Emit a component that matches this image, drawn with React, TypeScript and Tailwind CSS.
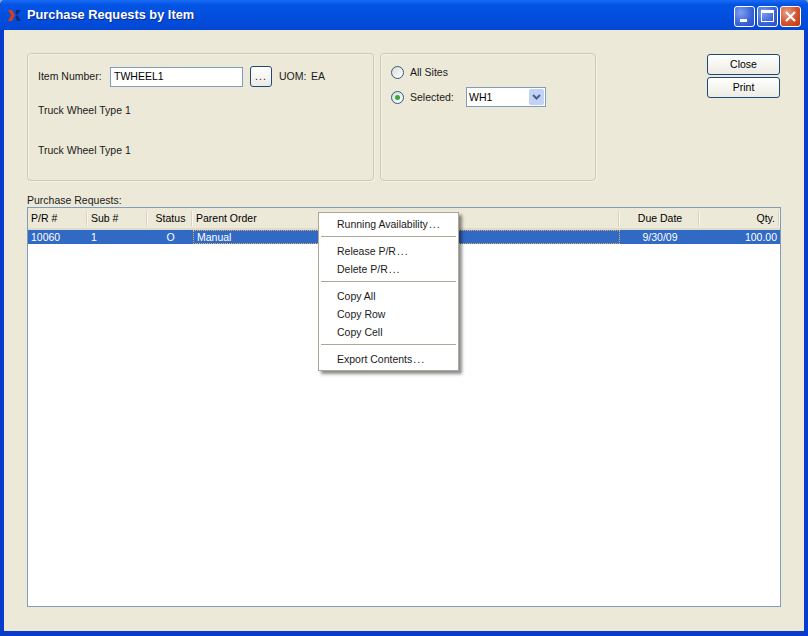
import React from "react";

const font = "font-['Liberation_Sans',sans-serif]";

function WinButton({ kind }: { kind: "min" | "max" | "close" }) {
  const bg =
    kind === "close"
      ? "bg-[radial-gradient(circle_at_30%_30%,#e8a088,#d6512c_55%,#b93a12)]"
      : "bg-[radial-gradient(circle_at_30%_30%,#7d9ff0,#3a62d8_60%,#2a4cc4)]";
  return (
    <div className={`w-[21px] h-[21px] rounded-[3px] border border-white flex items-center justify-center ${bg}`}>
      {kind === "min" && <div className="w-[7px] h-[3px] bg-white mt-[9px] mr-[3px]" />}
      {kind === "max" && <div className="w-[13px] h-[12px] border border-white border-t-[3px]" />}
      {kind === "close" && (
        <svg width="13" height="13" viewBox="0 0 13 13">
          <path d="M2 2l9 9M11 2l-9 9" stroke="#fff" strokeWidth="2.2" />
        </svg>
      )}
    </div>
  );
}

function PushButton({ label }: { label: string }) {
  return (
    <div className="w-[73px] h-[21px] rounded-[3px] border border-[#1f4a78] bg-gradient-to-b from-white to-[#ecebe4] flex items-center justify-center text-black">
      {label}
    </div>
  );
}

function Radio({ checked }: { checked?: boolean }) {
  return (
    <div className="w-[13px] h-[13px] rounded-full border border-[#2f5a86] bg-gradient-to-br from-[#dcdcd4] to-white flex items-center justify-center">
      {checked && <div className="w-[5px] h-[5px] rounded-full bg-[#3aa63e]" />}
    </div>
  );
}

function HeaderCell({ label, width, right, center }: { label: string; width: string; right?: boolean; center?: boolean }) {
  return (
    <div className={`${width} h-[21px] flex items-center pl-[3px] relative ${right ? "justify-end pr-[5px]" : "pr-[3px]"} ${center ? "justify-center" : ""}`}>
      {label}
      <div className="absolute right-0 top-[3px] h-[15px] w-[2px] bg-[#f8f7f0] border-l border-[#d6d3c2]" />
    </div>
  );
}

function MenuItem({ label, dots }: { label: string; dots?: boolean }) {
  return (
    <div className="h-[18px] pl-[18px] flex items-center text-[#1a1a1a]">
      {label}
      {dots && <span className="tracking-[1px] ml-[1px]">...</span>}
    </div>
  );
}

function MenuSep() {
  return <div className="h-px bg-[#aca899] mx-[2px] mt-[3px] mb-[5px]" />;
}

export default function App() {
  return (
    <div className="w-[808px] h-[636px] bg-[#8fa5c8]">
      <div className={`w-[808px] h-[636px] rounded-t-[5px] bg-[#0a3ccc] flex flex-col overflow-hidden text-[10.5px] leading-none text-[#1a1a1a] ${font}`}>
        {/* Title bar */}
        <div className="h-[30px] shrink-0 bg-gradient-to-b from-[#1a6cf5] via-[#0354e4] via-15% to-[#0248d4] flex items-center pl-[8px] pr-[7px]">
          <svg width="13" height="11" viewBox="0 0 13 11">
            <path d="M0 0h4l3 5-3 6H0l3-6z" fill="#d0401e" />
            <path d="M8 0h5L9 5 7.5 3zM7.5 7L9 5l4 6H9z" fill="#0c2a78" />
          </svg>
          <div className="ml-[6px] text-white font-bold text-[12.8px] [text-shadow:1px_1px_0_#0a2a90]">Purchase Requests by Item</div>
          <div className="ml-auto mt-[2px] flex gap-[2px]">
            <WinButton kind="min" />
            <WinButton kind="max" />
            <WinButton kind="close" />
          </div>
        </div>

        {/* Client area */}
        <div className="relative flex-1 mx-[4px] mb-[5px] bg-[#ece9d8] pt-[23px] pl-[23px] pr-[24px] flex flex-col">
          <div className="flex items-start">
            <div className="w-[347px] h-[128px] rounded-[4px] border border-[#cdcab8] shadow-[inset_1px_1px_0_#f5f3e8,1px_1px_0_#f5f3e8] pl-[10px] pt-[12px]">
              <div className="flex items-center h-[21px]">
                <span className="w-[66px]">Item Number:</span>
                <div className="ml-[6px] w-[133px] h-[20px] border border-[#7f9db9] bg-white flex items-center px-[3px] text-black">TWHEEL1</div>
                <div className="ml-[7px] w-[22px] h-[21px] rounded-[3px] border border-[#1f4a78] bg-gradient-to-b from-white to-[#ecebe4] flex items-center justify-center tracking-[1px]">...</div>
                <span className="ml-[7px] w-[32px]">UOM:</span>
                <span>EA</span>
              </div>
              <div className="mt-[18px]">Truck Wheel Type 1</div>
              <div className="mt-[29px]">Truck Wheel Type 1</div>
            </div>

            <div className="ml-[6px] w-[216px] h-[128px] rounded-[4px] border border-[#cdcab8] shadow-[inset_1px_1px_0_#f5f3e8,1px_1px_0_#f5f3e8] pl-[10px] pt-[11px]">
              <div className="flex items-center h-[14px] gap-[6px]">
                <Radio />
                <span>All Sites</span>
              </div>
              <div className="flex items-center h-[20px] mt-[8px]">
                <Radio checked />
                <span className="ml-[6px] w-[56px]">Selected:</span>
                <div className="w-[80px] h-[20px] border border-[#7f9db9] bg-white flex items-center pl-[2px] pr-px text-black">
                  WH1
                  <div className="ml-auto w-[15px] h-[16px] rounded-[2px] bg-[#c1d2f7] flex items-center justify-center">
                    <svg width="9" height="7" viewBox="0 0 9 7">
                      <path d="M1 1l3.5 3.5L8 1" fill="none" stroke="#4d6185" strokeWidth="2" />
                    </svg>
                  </div>
                </div>
              </div>
            </div>

            <div className="ml-auto flex flex-col gap-[2px] pt-px">
              <PushButton label="Close" />
              <PushButton label="Print" />
            </div>
          </div>

          <div className="mt-[14px] h-[12px]">Purchase Requests:</div>

          {/* Table */}
          <div className="w-[754px] h-[400px] border border-[#7f9db9] bg-white flex flex-col">
            <div className="flex h-[22px] bg-[#ece9d8] border-b-2 border-[#dedbca] text-black">
              <HeaderCell label="P/R #" width="w-[60px]" />
              <HeaderCell label="Sub #" width="w-[60px]" />
              <HeaderCell label="Status" width="w-[45px]" center />
              <HeaderCell label="Parent Order" width="w-[427px]" />
              <HeaderCell label="Due Date" width="w-[80px]" center />
              <HeaderCell label="Qty." width="w-[80px]" right />
            </div>
            <div className="flex h-[14px] bg-[#316ac5] text-white items-center">
              <div className="w-[60px] px-[3px]">10060</div>
              <div className="w-[60px] px-[3px]">1</div>
              <div className="w-[45px] text-center">O</div>
              <div className="w-[427px] h-full px-[3px] flex items-center border border-dotted border-[#e8b060]">Manual</div>
              <div className="w-[80px] text-center">9/30/09</div>
              <div className="w-[80px] px-[3px] text-right">100.00</div>
            </div>
          </div>

          {/* Context menu */}
          <div className="absolute left-[314px] top-[182px] w-[141px] h-[159px] bg-white border border-[#aca899] pt-[2px] shadow-[3px_3px_3px_rgba(0,0,0,0.45)]">
            <MenuItem label="Running Availability" dots />
            <MenuSep />
            <MenuItem label="Release P/R" dots />
            <MenuItem label="Delete P/R" dots />
            <MenuSep />
            <MenuItem label="Copy All" />
            <MenuItem label="Copy Row" />
            <MenuItem label="Copy Cell" />
            <MenuSep />
            <MenuItem label="Export Contents" dots />
          </div>
        </div>
      </div>
    </div>
  );
}
